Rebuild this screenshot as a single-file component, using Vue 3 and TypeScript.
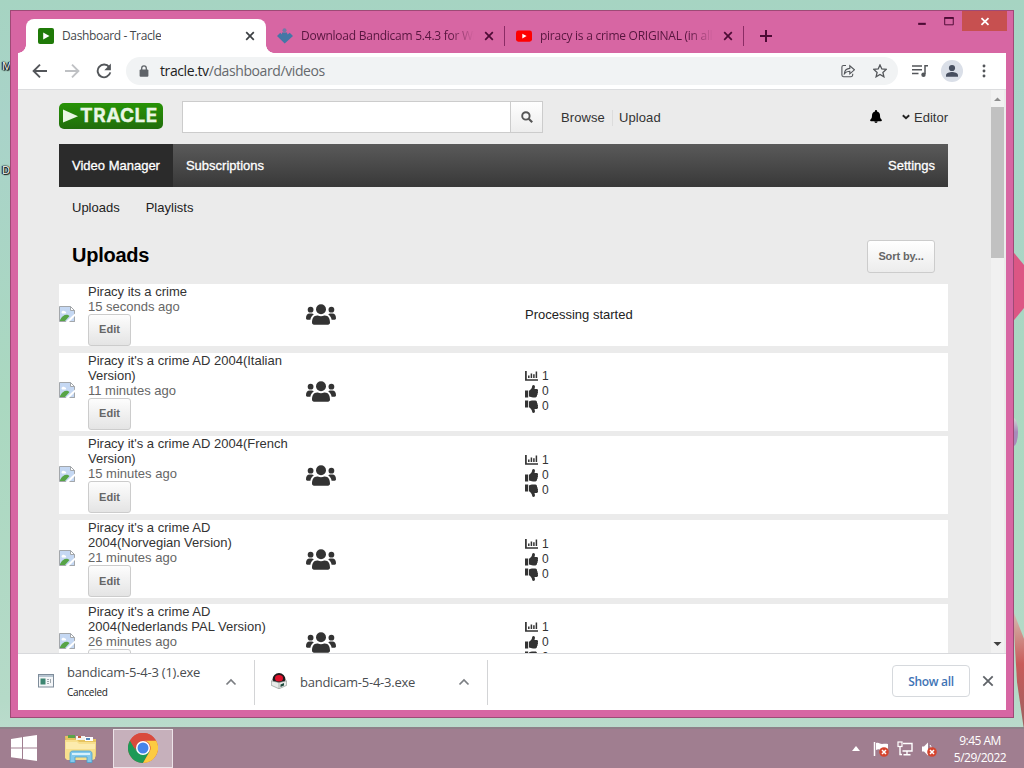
<template>
  <div class="desktop">
    <div class="petal petal-mid"></div>
    <div class="petal petal-small"></div>
    <div class="petal petal-low"></div>
    <span class="desk-label label-m">M</span>
    <span class="desk-label label-d">D</span>

    <div class="window">
      <div class="tab-strip">
        <div class="tab active">
          <svg class="fav" viewBox="0 0 16 16">
            <rect width="16" height="16" rx="2" fill="#1f7a08" />
            <path d="M5.2 4.6 11.5 8l-6.3 3.4z" fill="#fff" />
          </svg>
          <span class="tab-title t1">Dashboard - Tracle</span>
          <svg class="tab-x" viewBox="0 0 10 10"><path d="M1.2 1.2l7.6 7.6M8.8 1.2 1.2 8.8" /></svg>
        </div>
        <div class="tab second">
          <svg class="fav" viewBox="0 0 16 16">
            <circle cx="7.5" cy="2.2" r="2" fill="#7379a8" />
            <path d="M5 4.500h5L10.500 6.500l2.200-1.700L16 8 7.700 15.600 0 8l3.300-3.200L4.800 6.500z" fill="#4377a6" />
          </svg>
          <span class="tab-title fade t2">Download Bandicam 5.4.3 for Windows</span>
          <svg class="tab-x" viewBox="0 0 10 10"><path d="M1.2 1.2l7.6 7.6M8.8 1.2 1.2 8.8" /></svg>
        </div>
        <div class="tab third">
          <svg class="fav" viewBox="0 0 16 16">
            <rect y="2.5" width="16" height="11.2" rx="2.4" fill="#f00" />
            <path d="M6.3 5.7 10.6 8l-4.3 2.4z" fill="#fff" />
          </svg>
          <span class="tab-title fade t3">piracy is a crime ORIGINAL (in all languages)</span>
          <svg class="tab-x" viewBox="0 0 10 10"><path d="M1.2 1.2l7.6 7.6M8.8 1.2 1.2 8.8" /></svg>
        </div>
        <svg class="new-tab" viewBox="0 0 12 12"><path d="M6 0v12M0 6h12" /></svg>
        <div class="win-buttons">
          <svg class="wb" viewBox="0 0 27 21"><path d="M10 13.5h8" stroke="#4d0b35" stroke-width="2.2" /></svg>
          <svg class="wb" viewBox="0 0 27 21">
            <path d="M9.5 7.5v7h9v-7" fill="none" stroke="#4d0b35" /><path d="M9 7.3h10" stroke="#4d0b35" stroke-width="2" />
          </svg>
          <svg class="wb-close" viewBox="0 0 45 21"><path d="M19.3 7.5l7.4 7M26.7 7.5l-7.4 7" stroke="#fff" stroke-width="1.9" /></svg>
        </div>
      </div>

      <div class="client">
        <div class="toolbar">
          <svg class="nav-icon" viewBox="0 0 16 16"><path d="M15 8H2M8 1.6 1.6 8 8 14.4" stroke="#53565a" /></svg>
          <svg class="nav-icon" viewBox="0 0 16 16"><path d="M1 8h13M8 1.6 14.4 8 8 14.4" stroke="#bfc1c4" /></svg>
          <svg class="nav-icon" viewBox="0 0 16 16">
            <path d="M13.2 4.1A6.4 6.4 0 1 0 14.3 9.4" stroke="#53565a" /><path d="M14.9.6v6.6H8.3z" fill="#53565a" />
          </svg>
          <div class="omnibox">
            <svg class="lock" viewBox="0 0 10 12">
              <rect x=".6" y="4.4" width="8.8" height="7.4" rx="1" fill="#5f6368" />
              <path d="M2.7 5V3.2a2.3 2.3 0 0 1 4.6 0V5" fill="none" stroke="#5f6368" stroke-width="1.3" />
            </svg>
            <span class="url">tracle.tv<span class="path">/dashboard/videos</span></span>
            <svg class="share" viewBox="0 0 14 14">
              <path d="M5 1.5H2.5a1.6 1.6 0 0 0-1.6 1.6v8a1.6 1.6 0 0 0 1.6 1.6h7.6a1.6 1.6 0 0 0 1.6-1.6V9.7" />
              <path d="M3.4 9.6c.3-3.3 2.2-5 5.4-5.2V1.8l4.6 4-4.6 4V7.2C6.4 7.2 4.7 7.9 3.4 9.6z" />
            </svg>
            <svg class="star" viewBox="0 0 14 14">
              <path d="M7 .9l1.8 4.1 4.4.4-3.3 3 1 4.4L7 10.5l-3.9 2.3 1-4.4-3.3-3 4.4-.4z" />
            </svg>
          </div>
          <svg class="media" viewBox="0 0 16 14">
            <path d="M0 2h10M0 5.7h10M0 9.4h6.5M13 10V1.7h3.2" fill="none" stroke="#53565a" stroke-width="1.5" />
            <circle cx="11.5" cy="10.8" r="2.2" fill="#53565a" />
          </svg>
          <svg class="avatar" viewBox="0 0 22 22">
            <circle cx="11" cy="11" r="11" fill="#dadfe8" /><circle cx="11" cy="8" r="3.1" fill="#474f60" />
            <path d="M5 16.8v-1.6c0-2.2 3.6-3.2 6-3.2s6 1 6 3.2v1.6z" fill="#474f60" />
          </svg>
          <svg class="dots" viewBox="0 0 4 14">
            <circle v-for="y in [2, 7, 12]" :key="y" cx="2" :cy="y" r="1.45" fill="#53565a" />
          </svg>
        </div>

        <div class="viewport">
          <main class="page">
            <header class="site-head">
              <div class="logo">
                <svg viewBox="0 0 15 14"><path d="M0 .5 15 7.2 0 13.5z" fill="#e9f6e4" /></svg>
                <span>TRACLE</span>
              </div>
              <div class="search">
                <input type="text" class="search-input" />
                <button class="search-btn">
                  <svg viewBox="0 0 12 12">
                    <circle cx="4.9" cy="4.9" r="3.7" fill="none" stroke="#555" stroke-width="1.9" />
                    <path d="M7.7 7.7l3.5 3.5" stroke="#555" stroke-width="2.1" />
                  </svg>
                </button>
              </div>
              <a class="head-link browse">Browse</a>
              <a class="head-link upload">Upload</a>
              <svg class="bell" viewBox="0 0 12 13">
                <path d="M6 0c.6 0 1 .4 1 1v.5c2 .5 3 2 3 3.9 0 2.6.8 3.3 1.7 4.3.5.6.2 1.5-.6 1.5H.9c-.8 0-1.1-.9-.6-1.5C1.2 8.7 2 8 2 5.4c0-1.9 1-3.4 3-3.9V1c0-.6.4-1 1-1zM4.4 11.6h3.2c0 .8-.7 1.4-1.6 1.4s-1.6-.6-1.6-1.4z" />
              </svg>
              <svg class="chev" viewBox="0 0 8 6"><path d="M.8 1.2l3.2 3 3.2-3" fill="none" stroke="#222" stroke-width="1.9" /></svg>
              <a class="head-link">Editor</a>
            </header>

            <nav class="main-nav">
              <a class="nav-item on">Video Manager</a>
              <a class="nav-item">Subscriptions</a>
              <a class="nav-item last">Settings</a>
            </nav>
            <nav class="sub-nav">
              <a>Uploads</a>
              <a>Playlists</a>
            </nav>

            <div class="title-row">
              <h1>Uploads</h1>
              <button class="btn sort">Sort by...</button>
            </div>

            <div class="videos">
              <div v-for="v in videos" :key="v.ago" class="video" :class="{ processing: v.status }">
                <svg class="broken" viewBox="0 0 16 16">
                  <path d="M.5.5h11l4 4v11H.5z" fill="#c5d8f3" stroke="#a3a7ab" />
                  <path d="M11.5.5v4h4z" fill="#fff" stroke="#a3a7ab" />
                  <path d="M2.5 6.5c0-2 3-2.5 3.5-1 1.500 0 1.500 2 .2 2H3z" fill="#fff" />
                  <path d="M1 14c2-4 5-6 8-5l1.500 1L6 15H1z" fill="#57a447" />
                  <path d="M16 7.500v2.500L10 16H6.500z" fill="#fff" /><path d="M11 15.500h4.500V11" fill="none" stroke="#a3a7ab" />
                </svg>
                <div class="info">
                  <div class="name">
                    <div v-for="line in v.title" :key="line">{{ line }}</div>
                  </div>
                  <div class="ago">{{ v.ago }}</div>
                  <button class="btn edit">Edit</button>
                </div>
                <svg class="users" viewBox="0 0 30 21">
                  <circle cx="15" cy="5.2" r="5" /><circle cx="4.6" cy="5.7" r="2.9" /><circle cx="25.4" cy="5.7" r="2.9" />
                  <path d="M6 18.6c0-4.4 1.7-7.2 5.2-7.2h.6c2 1 4.4 1 6.4 0h.6c3.5 0 5.2 2.8 5.2 7.2 0 1.3-.8 2.1-2 2.1H8c-1.2 0-2-.8-2-2.1z" />
                  <path d="M0 14.3c0-3 1.3-4.7 3.6-4.7h2.2c.8 0 1.4.3 2 .7-2 1.4-3 3.2-3.4 5.4H1.3c-.8 0-1.3-.5-1.3-1.4zM30 14.3c0-3-1.3-4.7-3.6-4.7h-2.2c-.8 0-1.4.3-2 .7 2 1.4 3 3.2 3.4 5.4h3.1c.8 0 1.3-.5 1.3-1.4z" />
                </svg>
                <div v-if="v.status" class="status">{{ v.status }}</div>
                <div v-else class="stats">
                  <div class="stat">
                    <svg viewBox="0 0 13 13">
                      <path d="M.9 1v9H13" fill="none" stroke="#333" stroke-width="1.7" />
                      <path d="M3.8 5.5v2.6M6.4 3.5v4.6M8.9 4.3v3.8M11.4 1.4v6.7" stroke="#333" stroke-width="1.5" />
                    </svg>
                    <span>{{ v.views }}</span>
                  </div>
                  <div class="stat">
                    <svg viewBox="0 0 13 13"><path :d="thumb" /></svg>
                    <span>{{ v.likes }}</span>
                  </div>
                  <div class="stat">
                    <svg viewBox="0 0 13 13" class="down"><path :d="thumb" /></svg>
                    <span>{{ v.dislikes }}</span>
                  </div>
                </div>
              </div>
            </div>
          </main>
          <div class="scrollbar">
            <svg viewBox="0 0 13 17"><path d="M3 11l3.5-3.5L10 11z" fill="#8d8d8d" /></svg>
            <div class="thumb"></div>
            <svg viewBox="0 0 13 17"><path d="M2.5 6h8l-4 4z" fill="#404040" /></svg>
          </div>
        </div>

        <div class="downloads">
          <div class="dl first">
            <svg class="dl-icon" viewBox="0 0 16 14">
              <rect x=".5" y=".5" width="15" height="12.5" fill="#f4f6f8" stroke="#7e8c9a" />
              <path d="M1 2h14" stroke="#a4b4c4" stroke-width="1.5" />
              <rect x="2.5" y="4.5" width="5" height="6" fill="#3d8571" />
              <path d="M9 5.5h2M9 7.5h2M9 9.5h2M12.5 5v4" stroke="#a0a8ae" />
            </svg>
            <div class="dl-text">
              <div class="dl-name n1">bandicam-5-4-3 (1).exe</div>
              <div class="dl-state">Canceled</div>
            </div>
            <svg class="caret" viewBox="0 0 12 8"><path d="M1.5 6.5 6 2l4.5 4.5" /></svg>
          </div>
          <div class="dl second-dl">
            <svg class="dl-icon disc" viewBox="0 0 16 16">
              <circle cx="8" cy="6.5" r="6.5" fill="#211a1c" /><ellipse cx="8" cy="5.2" rx="4" ry="3.2" fill="#e0112b" />
              <path d="M.3 7.8 8 9.5l7.7-1.700v4.500L8 15.800.3 12.300z" fill="#e8ebe9" stroke="#7d8582" stroke-width=".6" />
              <path d="M8 9.5v6.300" stroke="#959d99" stroke-width=".7" /><path d="M9.500 11.500l3.500-1.500v2.500l-3.500 1.500z" fill="#1e4a3c" />
            </svg>
            <div class="dl-name n2">bandicam-5-4-3.exe</div>
            <svg class="caret" viewBox="0 0 12 8"><path d="M1.5 6.5 6 2l4.5 4.5" /></svg>
          </div>
          <button class="show-all">Show all</button>
          <svg class="dl-close" viewBox="0 0 12 12"><path d="M1.3 1.3l9.4 9.4M10.7 1.3l-9.4 9.4" /></svg>
        </div>
      </div>
    </div>

    <footer class="taskbar">
      <svg class="start" viewBox="0 0 26 26">
        <path d="M0 4 11 2.3v10.2H0zM12 2.1 26 0v12.5H12zM0 13.5h11v10.2L0 22.2zM12 13.5h14V26l-14-2.1z" fill="#fff" />
      </svg>
      <svg class="explorer" viewBox="0 0 34 29">
        <path d="M1 2h9l2 3h20v17l-3 4H3z" fill="#e7c45f" />
        <path d="M4 1h7v3H4z" fill="#5aa34a" /><path d="M12 2h9v4h-9z" fill="#f5f4ee" /><path d="M21 3h8v4h-8z" fill="#fff" />
        <path d="M14 2h3v2h-3z" fill="#c35b3a" /><path d="M22 4h4v2h-4z" fill="#5488bb" />
        <path d="M1 6h12l2 2h17l-1 17-3 1H3L1 24z" fill="#f7df8d" /><path d="M2 8h11l2 2h16v5H2z" fill="#fcebad" />
        <path d="M6 28.5V20c0-2 1-3 3-3h16c2 0 3 1 3 3v8.5h-5V23H11v5.5z" fill="#83c9ec" stroke="#4a9fcc" stroke-width=".8" />
        <path d="M8 20h18" stroke="#d7f1fb" stroke-width="2" />
      </svg>
      <div class="chrome-slot">
        <svg viewBox="0 0 30 30">
          <circle cx="15" cy="15" r="15" fill="#d94a3d" />
          <path d="M2 7.5A15 15 0 0 0 15 30l6.5-11.3L15 15H6.3z" fill="#1d9a57" />
          <path d="M28 7.5A15 15 0 0 1 15 30l6.5-11.2A7.5 7.5 0 0 0 15 7.5z" fill="#fccb41" />
          <path d="M2 7.5 8.5 18.7A7.5 7.5 0 0 1 15 7.5h13A15 15 0 0 0 2 7.5z" fill="#d94a3d" />
          <circle cx="15" cy="15" r="7" fill="#fff" /><circle cx="15" cy="15" r="5.5" fill="#4484ea" />
        </svg>
      </div>
      <div class="tray">
        <svg class="tray-up" viewBox="0 0 8 5"><path d="M0 5l4-5 4 5z" fill="#fff" /></svg>
        <svg class="tray-icon" viewBox="0 0 16 16">
          <path d="M1.5 1v14" stroke="#fff" stroke-width="1.5" /><path d="M3 2c3-1 4 1 6 1s3-.5 6 0v6c-4 0-5 1-7 0s-3-1-5 0z" fill="#fff" />
          <circle cx="11" cy="11" r="4.8" fill="#d5452f" /><path d="M9 9l4 4M13 9l-4 4" stroke="#fff" stroke-width="1.5" />
        </svg>
        <svg class="tray-icon" viewBox="0 0 16 16">
          <path d="M6 2.5h9V10H5.5M10 10.5v3M6.5 13.8h7M3 5.5v8h2" fill="none" stroke="#fff" stroke-width="1.4" />
          <rect x="1" y="1" width="4" height="4.5" fill="#a58092" stroke="#fff" stroke-width="1.2" />
        </svg>
        <svg class="tray-icon" viewBox="0 0 16 16">
          <path d="M1 5.5h2L7 1.5v13l-4-4H1z" fill="#fff" /><path d="M9 4c1.3 1.5 1.3 3 1 5" fill="none" stroke="#fff" />
          <circle cx="11" cy="11" r="4.8" fill="#d5452f" /><path d="M9 9l4 4M13 9l-4 4" stroke="#fff" stroke-width="1.5" />
        </svg>
        <div class="clock">
          <div class="time">9:45 AM</div>
          <div class="date">5/29/2022</div>
        </div>
      </div>
    </footer>
  </div>
</template>

<script setup lang="ts">
import { ref } from 'vue'

interface Video {
  title: string[]
  ago: string
  status?: string
  views?: number
  likes?: number
  dislikes?: number
}

const videos = ref<Video[]>([
  { title: ['Piracy its a crime'], ago: '15 seconds ago', status: 'Processing started' },
  { title: ["Piracy it's a crime AD 2004(Italian", 'Version)'], ago: '11 minutes ago', views: 1, likes: 0, dislikes: 0 },
  { title: ["Piracy it's a crime AD 2004(French", 'Version)'], ago: '15 minutes ago', views: 1, likes: 0, dislikes: 0 },
  { title: ["Piracy it's a crime AD", '2004(Norvegian Version)'], ago: '21 minutes ago', views: 1, likes: 0, dislikes: 0 },
  { title: ["Piracy it's a crime AD", '2004(Nederlands PAL Version)'], ago: '26 minutes ago', views: 1, likes: 0, dislikes: 0 }
])

// flipped for dislikes
const thumb = 'M0 5.5h3.200V12.500H0zM4 5.800C5.500 4.700 6.800 3.700 7 2 7.100.8 7.600 0 8.400 0c1.300 0 1.700 1.100 1.500 2.300L9.500 4.100h2.300c1.200 0 1.600 1.300.9 2.100.6.7.4 1.600-.2 2 .4.8.1 1.500-.5 1.900.2 1.200-.5 2.300-1.700 2.300H8c-1.600 0-2.700-.5-4-.9z'
</script>

<style>
html,
body {
  overflow: hidden;
}
</style>

<style scoped>
.desktop {
  position: relative;
  width: 1024px;
  height: 768px;
  overflow: hidden;
  background: linear-gradient(180deg, #a6d4c2 0, #a9d3c9 120px, #aad8c0 400px, #b5dac8 700px, #badbcc 728px);
  font-family: "Open Sans", "Noto Sans", sans-serif;
  font-size: 12px;
}
.desktop * { box-sizing: border-box; }
svg { display: block; flex-shrink: 0; }
button { font: inherit; margin: 0; padding: 0; }

/* wallpaper */
.petal { position: absolute; }
.petal-mid {
  left: 1010px; top: 248px; width: 14px; height: 77px;
  background: #dc5684;
  clip-path: polygon(0 0, 100% 22%, 100% 78%, 0 100%);
}
.petal-small {
  left: 1009px; top: 418px; width: 9px; height: 28px;
  background: linear-gradient(#cfd8d4, #a88abb 50%);
  border-radius: 50%;
}
.petal-low {
  left: 1010px; top: 610px; width: 14px; height: 120px;
  background: linear-gradient(#d5c0b7, #c85b59 45%, #9b6162);
  clip-path: polygon(20% 0, 100% 24%, 100% 100%, 50% 60%);
}
.desk-label {
  position: absolute;
  left: 2px;
  color: #fff;
  font-size: 11px;
  line-height: 14px;
  text-shadow: 0 0 1px #000, 1px 1px 1px #000, -1px 0 1px #000, 0 0 2px #000;
}
.label-m { top: 59px; }
.label-d { top: 163px; }

/* window */
.window {
  position: absolute;
  left: 10px;
  top: 10px;
  width: 1004px;
  height: 708px;
  padding: 0 7px 7px;
  background: #d766a3;
  border: 1px solid #9e4a76;
}
.tab-strip {
  display: flex;
  align-items: flex-start;
  height: 42px;
}
.tab {
  display: flex;
  align-items: center;
  height: 34px;
  margin-top: 8px;
  color: #58163f;
}
.tab-title {
  margin-left: 8px;
  line-height: 18px;
  white-space: nowrap;
  overflow: hidden;
}
.fav { width: 16px; height: 16px; }
.tab-x { width: 10px; height: 10px; stroke: #4d0b35; stroke-width: 1.7; }
.tab.active {
  position: relative;
  width: 240px;
  margin-left: 8px;
  padding: 0 11px 0 12px;
  background: #fff;
  border-radius: 8px 8px 0 0;
  color: #45484c;
}
.tab.active::before,
.tab.active::after {
  content: '';
  position: absolute;
  bottom: 0;
  width: 8px;
  height: 8px;
}
.tab.active::before { left: -8px; background: radial-gradient(circle at 0 0, transparent 7.5px, #fff 8px); }
.tab.active::after { right: -8px; background: radial-gradient(circle at 100% 0, transparent 7.5px, #fff 8px); }
.tab.active .tab-x { margin-left: auto; stroke: #3c4043; }
.tab.second { width: 239px; padding: 0 11px; }
.tab.third { width: 239px; padding: 0 11px; }
.tab.second,
.tab.third { background: linear-gradient(#8b2c65, #8b2c65) right center / 1px 20px no-repeat; }
.t1 { letter-spacing: -0.35px; }
.t2,
.t3 { width: 173px; letter-spacing: -0.25px; }
.fade { mask-image: linear-gradient(90deg, #000 86%, transparent); }
.tab.second .tab-x,
.tab.third .tab-x { margin-left: auto; }
.new-tab { width: 12px; height: 12px; margin: 19px 0 0 16px; stroke: #4d0b35; stroke-width: 2; }
.win-buttons { display: flex; margin: 0 -1px 0 auto; }
.wb { width: 27px; height: 20px; }
.wb-close { width: 45px; height: 20px; background: #c75050; }

.client {
  display: flex;
  flex-direction: column;
  height: 657px;
  background: #fff;
}
.toolbar {
  display: flex;
  align-items: center;
  height: 37px;
  padding: 0 20px 0 14px;
  border-bottom: 1px solid #dcdddf;
}
.nav-icon { width: 16px; height: 16px; margin-right: 16px; fill: none; stroke-width: 1.9; }
.omnibox {
  display: flex;
  align-items: center;
  width: 772px;
  height: 28px;
  margin-left: -2px;
  padding: 0 11px 0 13px;
  border-radius: 14px;
  background: #f1f3f4;
}
.lock { width: 10px; height: 12px; }
.url { margin-left: 11px; font-size: 14px; line-height: 20px; color: #222; letter-spacing: -0.4px; }
.path { color: #66696d; }
.share { width: 14px; height: 14px; margin-left: auto; fill: none; stroke: #53565a; stroke-width: 1.1; }
.star { width: 14px; height: 14px; margin-left: 18px; fill: none; stroke: #53565a; stroke-width: 1.3; }
.media { width: 16px; height: 14px; margin-left: 14px; }
.avatar { width: 22px; height: 22px; margin-left: 13px; }
.dots { width: 4px; height: 14px; margin-left: auto; }

/* page */
.viewport {
  display: flex;
  height: 563px;
  overflow: hidden;
  background: #ebebeb;
  font-family: "Liberation Sans", Arial, sans-serif;
  font-size: 13px;
}
.page { width: 889px; margin-left: 41px; }
.site-head { display: flex; align-items: center; height: 54px; }
.logo {
  display: flex;
  align-items: center;
  width: 104px;
  height: 26px;
  margin-top: -3px;
  padding-left: 4px;
  border-radius: 5px;
  background: linear-gradient(#279306, #216d0c);
  color: #e9f6e4;
}
.logo svg { width: 15px; height: 14px; }
.logo span {
  margin-left: 2px;
  font-family: Inter, sans-serif;
  font-size: 19px;
  font-weight: 700;
  line-height: 24px;
  letter-spacing: 0.5px;
  -webkit-text-stroke: 0.3px #e9f6e4;
}
.search { display: flex; margin-left: 19px; }
.search-input { width: 329px; height: 32px; padding: 0 8px; border: 1px solid #ccc; outline: none; background: #fff; }
.search-btn {
  display: flex;
  align-items: center;
  justify-content: center;
  width: 32px;
  height: 32px;
  border: 1px solid #ccc;
  border-left: 0;
  background: linear-gradient(#fefefe, #ededed);
}
.search-btn svg { width: 12px; height: 12px; }
.head-link { margin-top: 2px; color: #333; line-height: 16px; }
.browse { margin-left: 18px; padding-right: 7px; border-right: 1px solid #dcdcdc; letter-spacing: 0.1px; }
.upload { margin-left: 6px; letter-spacing: 0.1px; }
.bell { width: 12px; height: 13px; margin: -1px 0 0 auto; }
.chev { width: 8px; height: 6px; margin: 0 4px 0 20px; }
.main-nav {
  display: flex;
  height: 43px;
  background: linear-gradient(#5a5a5a, #383838);
}
.nav-item {
  padding: 0 13px;
  color: #fff;
  line-height: 43px;
  -webkit-text-stroke: 0.3px #fff;
}
.nav-item.on { background: #2b2b2b; }
.nav-item.last { margin-left: auto; }
.sub-nav { display: flex; gap: 26px; padding: 12px 13px 0; color: #222; line-height: 17px; }
.title-row {
  display: flex;
  align-items: center;
  justify-content: space-between;
  padding: 24px 13px 0;
}
h1 { margin: -4px 0 0; font-size: 20px; line-height: 24px; color: #000; letter-spacing: -0.25px; }
.btn {
  display: block;
  height: 32px;
  border: 1px solid #ccc;
  border-radius: 3px;
  background: linear-gradient(#fdfdfd, #e4e4e4);
  color: #666;
  font-size: 11px;
  font-weight: bold;
}
.sort { width: 68px; height: 33px; padding-bottom: 1px; background: linear-gradient(#fff, #ececec); letter-spacing: -0.1px; }
.videos { padding-top: 11px; }
.video {
  display: grid;
  grid-template-columns: 29px 218px 219px 1fr;
  align-items: center;
  min-height: 78px;
  margin-bottom: 5.78px;
  background: #fff;
  line-height: 15px;
}
.video.processing { min-height: 62px; margin-bottom: 6.7px; }
.broken { width: 16px; height: 16px; margin-top: -3px; }
.info { align-self: start; }
.name { color: #333; }
.ago { color: #666; }
.edit { width: 43px; }
.processing .edit { padding-bottom: 1px; }
.users { width: 30px; height: 21px; fill: #333; }
.processing .users,
.status { position: relative; top: -1px; }
.status { color: #222; }
.stats { color: #333; }
.stat { display: flex; align-items: center; height: 15px; }
.stat svg { width: 13px; height: 13px; margin-right: 4px; fill: #333; }
.stat .down { transform: scaleY(-1); }
.stat span { font-size: 12px; }
.scrollbar { display: flex; flex-direction: column; width: 13px; margin-left: 43px; background: #f1f1f1; }
.scrollbar svg { width: 13px; height: 17px; }
.thumb { height: 151px; margin-bottom: auto; background: #c1c1c1; }

/* downloads shelf */
.downloads {
  display: flex;
  align-items: center;
  height: 57px;
  padding-right: 12px;
  border-top: 1px solid #d8d9dc;
  color: #4a4d51;
}
.dl { display: flex; align-items: center; height: 45px; border-right: 1px solid #d3d4d6; }
.dl.first { width: 237px; padding: 0 17px 0 20px; }
.dl.second-dl { width: 233px; padding: 0 17px 0 16px; }
.dl-icon { width: 16px; height: 14px; margin-top: -2px; }
.dl-icon.disc { height: 16px; }
.dl-text { margin: -2px 0 0 13px; }
.dl-name { font-size: 13px; line-height: 19px; white-space: nowrap; }
.n1 { letter-spacing: -0.22px; }
.n2 { margin-left: 13px; letter-spacing: -0.25px; }
.dl-state { margin-top: 3px; font-size: 10px; line-height: 14px; color: #222; letter-spacing: -0.25px; }
.caret { width: 12px; height: 8px; margin-left: auto; fill: none; stroke: #7b7e82; stroke-width: 1.7; }
.show-all {
  width: 78px;
  height: 32px;
  margin: -2px 0 0 auto;
  border: 1px solid #d6d9dd;
  border-radius: 4px;
  background: #fff;
  color: #3f74b5;
  font-size: 12px;
  font-weight: 600;
  letter-spacing: -0.3px;
}
.dl-close { width: 12px; height: 12px; margin: -2px 0 0 12px; stroke: #5f6368; stroke-width: 1.8; }

/* taskbar */
.taskbar {
  position: absolute;
  left: 0;
  right: 0;
  bottom: 0;
  display: flex;
  align-items: center;
  height: 41px;
  padding-left: 11px;
  border-top: 2px solid #8e8189;
  background: #a07e90;
}
.start { width: 26px; height: 26px; margin-top: -2px; }
.explorer { width: 34px; height: 29px; margin-left: 27px; }
.chrome-slot {
  display: flex;
  align-items: center;
  justify-content: center;
  width: 60px;
  height: 39px;
  margin-left: 15px;
  border: 1px solid #ece3e8;
  background: #c6b0bb;
}
.chrome-slot svg { width: 30px; height: 30px; margin-top: -1px; }
.tray { display: flex; align-items: center; margin-left: auto; padding-right: 17px; }
.tray-up { width: 8px; height: 5px; margin-right: 13px; }
.tray-icon { width: 16px; height: 16px; margin-right: 8px; }
.clock { width: 54px; margin-left: 8px; color: #fff; line-height: 17px; text-align: center; white-space: nowrap; }
.time,
.date { letter-spacing: -0.5px; }
</style>
